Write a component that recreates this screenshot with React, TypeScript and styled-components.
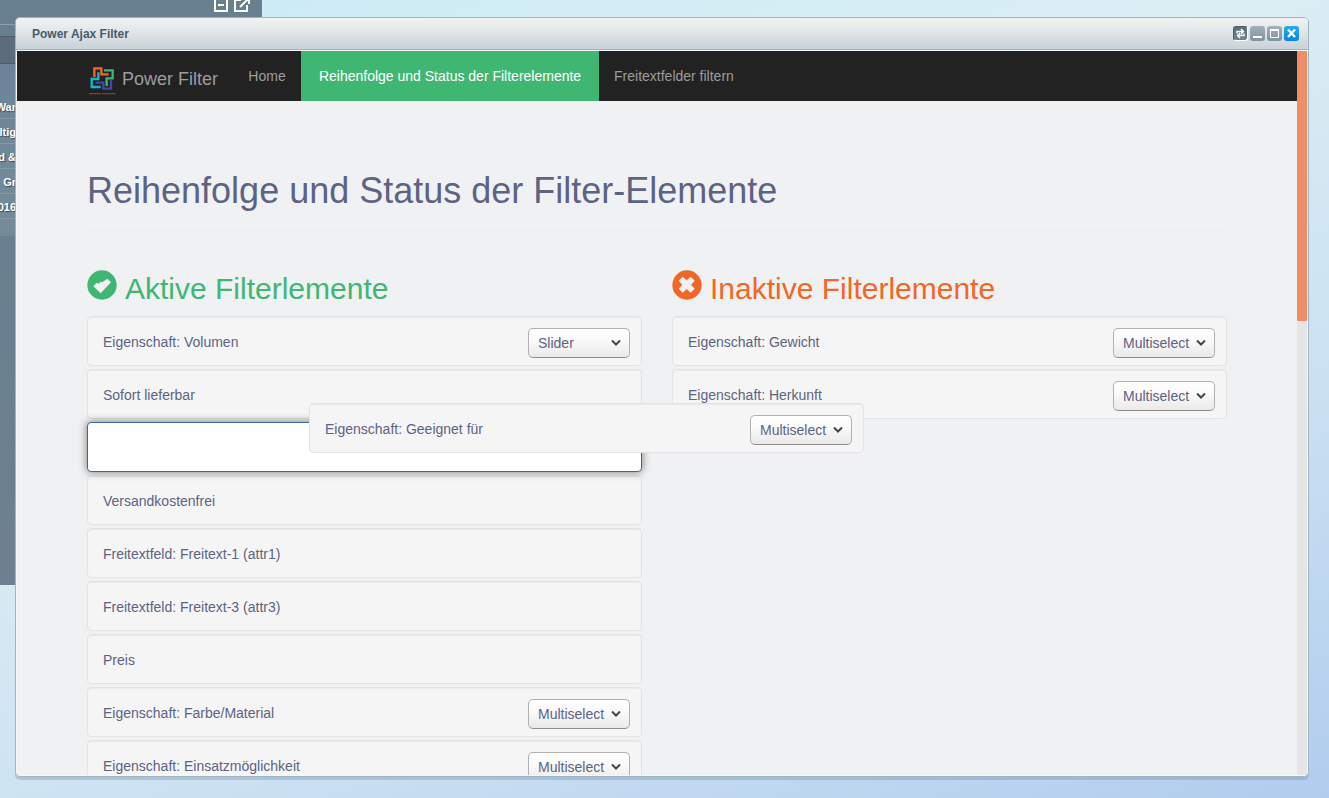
import React from 'react';
import styled, { createGlobalStyle, css } from 'styled-components';

const colors = {
  text: '#5c6383',
  green: '#3fb772',
  orange: '#f26726',
  page: '#f0f1f3',
};

const GlobalStyle = createGlobalStyle`
  *, *::before, *::after { box-sizing: border-box; }
  body {
    margin: 0;
    font: 14px/20px "Liberation Sans", Arial, sans-serif;
    color: ${colors.text};
  }
  h1, h2, p, ul { margin: 0; padding: 0; font-weight: 400; }
  ul { list-style: none; }
`;

const Desktop = styled.div`
  position: relative;
  display: flex;
  height: 100vh;
  padding: 17px 20px 21px 15px;
  overflow: hidden;
  background: linear-gradient(160deg, #c9ebf6 0%, #dbeef4 35%, #cbe1f2 68%, #b1ccee 100%);
`;

/* Window lying behind the active one */
const BackWindow = styled.aside`
  position: absolute;
  top: 0;
  left: 0;
  width: 262px;
  height: 585px;
  background: linear-gradient(#66808f, #68818f 50%, #6d808f);
`;

const BackTools = styled.div`
  display: flex;
  justify-content: flex-end;
  height: 25px;
  padding-right: 11px;
  border-bottom: 1px solid #85a0ae;
`;

const BackBar = styled.div`
  height: 28px;
  margin-top: 11px;
  background: #5c6c7a;
  border: solid #4c5d6a;
  border-width: 1px 0;
`;

const BackList = styled.ul`
  height: 172px;
  padding-top: 30px;
  background: linear-gradient(#6b839a, #6e8797 30%, #748b99);
`;

const BackRow = styled.li`
  display: flex;
  justify-content: flex-end;
  width: 16px;
  height: 25px;
  font-size: 11px;
  line-height: 27px;
  font-weight: 700;
  color: #fff;
  white-space: nowrap;
  text-shadow: 1px 1px 1px #3b4c58;
  border-bottom: 1px solid #8499a6;
`;

const Window = styled.main`
  position: relative;
  display: flex;
  flex: 1;
  flex-direction: column;
  min-width: 0;
  padding-bottom: 1px;
  overflow: hidden;
  background: #f5f7f8;
  border: 1px solid #a0b3be;
  border-radius: 5px;
`;

const WindowShell = styled.div`
  display: flex;
  flex: 1;
  min-width: 0;
  z-index: 1;
  border-radius: 5px;
  box-shadow: 0 3px 0 rgba(110, 140, 170, 0.35);
`;

const TitleBar = styled.header`
  display: flex;
  flex: none;
  align-items: center;
  justify-content: space-between;
  height: 32px;
  padding: 0 9px 0 16px;
  background: linear-gradient(#f1f2f2, #e2e5e7 45%, #c8d2d9);
  border-bottom: 1px solid #a3b4bf;
`;

const WindowTitle = styled.p`
  font-size: 12px;
  line-height: 16px;
  font-weight: 700;
  color: #475c6a;
`;

const WindowTools = styled.div`
  display: flex;
  gap: 2px;
`;

const ToolButton = styled.button<{ $kind: 'dark' | 'grey' | 'blue' }>`
  width: 15px;
  height: 15px;
  padding: 0;
  border: 0;
  border-radius: 3px;
  background: linear-gradient(#a3b1bc, #7f929f);
  ${(p) => p.$kind === 'dark' && css`
    background: linear-gradient(#5b6c79, #718390);
    border: 1px solid #51616d;
    border-bottom-color: #fff;
    border-right-color: #fff;
  `}
  ${(p) => p.$kind === 'blue' && css`
    background: linear-gradient(#20adfa, #0a84dc);
  `}
  svg { display: block; width: 100%; height: 100%; }
`;

const WindowBody = styled.div`
  display: flex;
  flex: 1;
  min-height: 0;
  margin: 1px 1px 0;
`;

const Page = styled.div`
  flex: 1;
  min-width: 0;
  overflow: hidden;
  background: ${colors.page};
`;

const ScrollTrack = styled.div`
  flex: none;
  width: 10px;
  background: #e5e5e5;
`;

const ScrollThumb = styled.div`
  height: 270px;
  background: #f08d66;
  border-radius: 0 0 1px 1px;
`;

const NavBar = styled.nav`
  background: #222;
`;

const Container = styled.div`
  max-width: 1170px;
  margin: 0 auto;
  padding: 0 15px;
`;

const NavRow = styled(Container)`
  display: flex;
  height: 50px;
`;

const NavLink = styled.a<{ $active?: boolean; $minWidth?: number }>`
  min-width: ${(p) => p.$minWidth ?? 0}px;
  padding: 15px;
  color: ${(p) => (p.$active ? '#fff' : '#9d9d9d')};
  background: ${(p) => (p.$active ? colors.green : 'transparent')};
  text-align: center;
  text-decoration: none;
  white-space: nowrap;
`;

const Brand = styled(NavLink)`
  display: flex;
  gap: 5px;
  padding: 14px 15px 0 2px;
  font-size: 18px;
  line-height: 28px;
  svg { flex: none; width: 28px; height: 32px; }
`;

const PageTitle = styled.h1`
  margin-top: 70px;
  padding-bottom: 19px;
  font-size: 36px;
  line-height: 40px;
  border-bottom: 1px solid #ebecee;
`;

const Columns = styled.div`
  display: grid;
  grid-template-columns: 1fr 1fr;
  gap: 30px;
  margin-top: 39px;
`;

const ColumnTitle = styled.h2<{ $tone: string }>`
  display: flex;
  gap: 8px;
  margin-bottom: 9px;
  font-size: 30px;
  line-height: 37px;
  color: ${(p) => p.$tone};
  svg { flex: none; width: 30px; height: 30px; }
`;

const List = styled.ul`
  display: flex;
  flex-direction: column;
  gap: 3px;
`;

const panel = css`
  display: flex;
  justify-content: space-between;
  height: 50px;
  padding: 11px 11px 0 15px;
  background: #f5f5f5;
  border: 1px solid #e3e3e5;
  border-radius: 4px;
  box-shadow: inset 0 1px 1px rgba(0, 0, 0, 0.05);
`;

const Item = styled.li`
  ${panel}
`;

const ItemLabel = styled.label`
  line-height: 28px;
`;

const DropTarget = styled.li`
  position: relative;
  height: 50px;
  background: #fff;
  border: 1px solid #3a66a3;
  border-radius: 4px;
  box-shadow: 0 0 8px rgba(0, 0, 0, 0.5);
`;

const DraggedItem = styled.div`
  ${panel}
  position: absolute;
  z-index: 2;
  top: -20px;
  left: 221px;
  width: calc(100% + 2px);
`;

const SelectWrap = styled.span`
  display: grid;
  width: 102px;
  height: 30px;
  > * { grid-area: 1 / 1; }
  svg {
    align-self: center;
    justify-self: end;
    width: 10px;
    height: 6px;
    margin-right: 9px;
    pointer-events: none;
  }
`;

const Select = styled.select`
  appearance: none;
  width: 100%;
  height: 30px;
  padding: 0 9px;
  font: inherit;
  color: inherit;
  background: linear-gradient(#fff, #fafafa 40%, #ebe9e8);
  border: 1px solid #b3b1b0;
  border-bottom-color: #8f8d8c;
  border-radius: 5px;
`;

function KindSelect({ id, value }: { id: string; value: string }) {
  return (
    <SelectWrap>
      <Select id={id} defaultValue={value}>
        <option>Multiselect</option>
        <option>Slider</option>
      </Select>
      <svg viewBox="0 0 10 6" fill="none" stroke="#444" strokeWidth="2" aria-hidden="true">
        <path d="M1 0.500l4 4 4-4" />
      </svg>
    </SelectWrap>
  );
}

type Filter = { name: string; kind?: string };

function FilterContent({ id, filter }: { id: string; filter: Filter }) {
  return (
    <>
      <ItemLabel htmlFor={filter.kind ? id : undefined}>{filter.name}</ItemLabel>
      {filter.kind && <KindSelect id={id} value={filter.kind} />}
    </>
  );
}

function FilterList({ prefix, filters }: { prefix: string; filters: Filter[] }) {
  return (
    <>
      {filters.map((filter, i) => (
        <Item key={filter.name}>
          <FilterContent id={`${prefix}-${i}`} filter={filter} />
        </Item>
      ))}
    </>
  );
}

const before: Filter[] = [
  { name: 'Eigenschaft: Volumen', kind: 'Slider' },
  { name: 'Sofort lieferbar' },
];
const after: Filter[] = [
  { name: 'Versandkostenfrei' },
  { name: 'Freitextfeld: Freitext-1 (attr1)' },
  { name: 'Freitextfeld: Freitext-3 (attr3)' },
  { name: 'Preis' },
  { name: 'Eigenschaft: Farbe/Material', kind: 'Multiselect' },
  { name: 'Eigenschaft: Einsatzmöglichkeit', kind: 'Multiselect' },
];
const inactive: Filter[] = [
  { name: 'Eigenschaft: Gewicht', kind: 'Multiselect' },
  { name: 'Eigenschaft: Herkunft', kind: 'Multiselect' },
];
const dragged: Filter = { name: 'Eigenschaft: Geeignet für', kind: 'Multiselect' };

function Logo() {
  return (
    <svg viewBox="0 0 84 96" fill="none" strokeWidth="7" aria-hidden="true">
      <path d="M16 36V10H37V28H59" stroke="#f26726" />
      <path d="M45 16H71V40H53V63" stroke="#3fb772" />
      <path d="M28 22V42H8V66H35" stroke="#14b4d2" />
      <path d="M20 53H43V71H66V45" stroke="#4447a4" />
      <path d="M0 86H34M38 86H80" stroke="#9c4526" strokeWidth="4" strokeDasharray="5 1" />
    </svg>
  );
}

export default function App() {
  return (
    <Desktop>
      <GlobalStyle />
      <BackWindow>
        <BackTools>
          <svg width="38" height="14" viewBox="0 0 38 14" fill="none" stroke="#fff" strokeWidth="2" aria-hidden="true">
            <path d="M2 -3V11H14V-3M5 5H11" />
            <path d="M28 0H22V11H34V5M27 7L36 -2M30 -1H36V4" />
          </svg>
        </BackTools>
        <BackBar />
        <BackList>
          {['War', 'altig', 'nd &', 'Gr', '016'].map((text) => (
            <BackRow key={text}>{text}</BackRow>
          ))}
        </BackList>
      </BackWindow>

      <WindowShell>
        <Window>
          <TitleBar>
            <WindowTitle>Power Ajax Filter</WindowTitle>
            <WindowTools>
              <ToolButton $kind="dark" aria-label="Neu laden">
                <svg viewBox="0 0 13 13" fill="none" stroke="#fff" strokeWidth="1.4">
                  <path d="M3 6.500V4.500H9M7 2L9.500 4.500L7 7M10 6.500V8.500H4M6 6L3.500 8.500L6 11" />
                </svg>
              </ToolButton>
              <ToolButton $kind="grey" aria-label="Minimieren">
                <svg viewBox="0 0 15 15"><path d="M3 10H12V12H3z" fill="#fff" /></svg>
              </ToolButton>
              <ToolButton $kind="grey" aria-label="Maximieren">
                <svg viewBox="0 0 15 15" fill="none" stroke="#fff">
                  <path d="M3.500 3V11.500H11.500V3" />
                  <path d="M3 4H12" strokeWidth="2" />
                </svg>
              </ToolButton>
              <ToolButton $kind="blue" aria-label="Schließen">
                <svg viewBox="0 0 15 15" stroke="#fff" strokeWidth="2.400">
                  <path d="M4 3.500L11 11M11 3.500L4 11" />
                </svg>
              </ToolButton>
            </WindowTools>
          </TitleBar>

          <WindowBody>
            <Page>
              <NavBar>
                <NavRow>
                  <Brand href="#">
                    <Logo />
                    Power Filter
                  </Brand>
                  <NavLink href="#home" $minWidth={68}>Home</NavLink>
                  <NavLink href="#status" $minWidth={298} $active>Reihenfolge und Status der Filterelemente</NavLink>
                  <NavLink href="#freitext">Freitextfelder filtern</NavLink>
                </NavRow>
              </NavBar>

              <Container>
                <PageTitle>Reihenfolge und Status der Filter-Elemente</PageTitle>
                <Columns>
                  <section>
                    <ColumnTitle $tone={colors.green}>
                      <svg viewBox="0 0 90 90" aria-hidden="true">
                        <circle cx="45" cy="45" r="44" fill={colors.green} />
                        <path d="M19 49L29 38L35 41L41 35L46 37L61 26L72 37L41 70z" fill={colors.page} />
                      </svg>
                      Aktive Filterlemente
                    </ColumnTitle>
                    <List>
                      <FilterList prefix="first" filters={before} />
                      <DropTarget>
                        <DraggedItem>
                          <FilterContent id="dragged" filter={dragged} />
                        </DraggedItem>
                      </DropTarget>
                      <FilterList prefix="rest" filters={after} />
                    </List>
                  </section>
                  <section>
                    <ColumnTitle $tone={colors.orange}>
                      <svg viewBox="0 0 90 90" aria-hidden="true">
                        <circle cx="45" cy="45" r="44" fill={colors.orange} />
                        <path d="M20 32L32 20L44 31L56 20L68 32L57 44L68 56L56 68L44 57L32 68L20 56L31 44z" fill={colors.page} />
                      </svg>
                      Inaktive Filterlemente
                    </ColumnTitle>
                    <List>
                      <FilterList prefix="inactive" filters={inactive} />
                    </List>
                  </section>
                </Columns>
              </Container>
            </Page>
            <ScrollTrack>
              <ScrollThumb />
            </ScrollTrack>
          </WindowBody>
        </Window>
      </WindowShell>
    </Desktop>
  );
}
